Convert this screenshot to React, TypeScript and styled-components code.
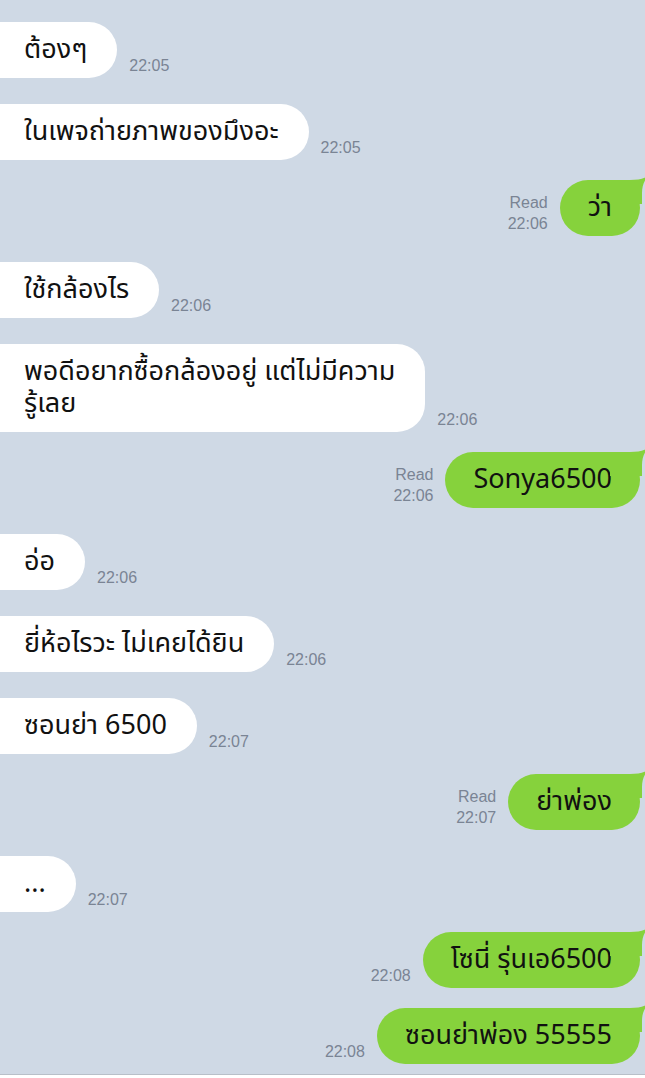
import React from 'react';
import styled, {createGlobalStyle} from 'styled-components';

interface Message {
  text: string;
  time: string;
  mine?: boolean;
  read?: boolean;
}

const messages: Message[] = [
  {text: 'ต้องๆ', time: '22:05'},
  {text: 'ในเพจถ่ายภาพของมึงอะ', time: '22:05'},
  {text: 'ว่า', time: '22:06', mine: true, read: true},
  {text: 'ใช้กล้องไร', time: '22:06'},
  {text: 'พอดีอยากซื้อกล้องอยู่ แต่ไม่มีความ\nรู้เลย', time: '22:06'},
  {text: 'Sonya6500', time: '22:06', mine: true, read: true},
  {text: 'อ่อ', time: '22:06'},
  {text: 'ยี่ห้อไรวะ ไม่เคยได้ยิน', time: '22:06'},
  {text: 'ซอนย่า 6500', time: '22:07'},
  {text: 'ย่าพ่อง', time: '22:07', mine: true, read: true},
  {text: '...', time: '22:07'},
  {text: 'โซนี่ รุ่นเอ6500', time: '22:08', mine: true},
  {text: 'ซอนย่าพ่อง 55555', time: '22:08', mine: true},
];

const GlobalStyle = createGlobalStyle`
  html, body {
    margin: 0;
    padding: 0;
    background: #cfd9e5;
    overflow: hidden;
  }
  * {
    box-sizing: border-box;
  }
`;

const Screen = styled.div`
  width: 645px;
  height: 1078px;
  display: flex;
  flex-direction: column;
  overflow: hidden;
  background: #cfd9e5;
  font-family: 'Noto Sans Thai', 'Noto Sans', 'Liberation Sans', sans-serif;
`;

const ChatList = styled.div`
  flex: 1;
  display: flex;
  flex-direction: column;
  padding-top: 22px;
`;

const Row = styled.div<{$mine?: boolean}>`
  display: flex;
  align-items: flex-end;
  justify-content: ${p => (p.$mine ? 'flex-end' : 'flex-start')};
  gap: 12px;
  margin-top: ${p => (p.$mine ? '20px' : '26px')};
  padding-right: 5px;
  &:first-child {
    margin-top: 0;
  }
`;

const Bubble = styled.div<{$mine?: boolean}>`
  position: relative;
  font-size: 27px;
  line-height: 32px;
  color: #111;
  white-space: pre-line;
  border-radius: 28px;
  padding: ${p => (p.$mine ? '12px 28px 12px 28px' : '12px 30px 12px 54px')};
  margin-left: ${p => (p.$mine ? '0' : '-30px')};
  background: ${p => (p.$mine ? '#86d23c' : '#ffffff')};
`;

const Tail = styled.svg`
  position: absolute;
  top: -4px;
  right: -8px;
  width: 38px;
  height: 28px;
`;

const Stamp = styled.div`
  font-family: 'Liberation Sans', sans-serif;
  font-size: 16px;
  line-height: 21px;
  color: #7a8494;
  text-align: right;
  margin-bottom: 2px;
  display: flex;
  flex-direction: column;
`;

const Footer = styled.div`
  height: 4px;
  border-top: 1px solid #b8bfc8;
  background: #ffffff;
`;

const ChatRow = ({m}: {m: Message}) => {
  const stamp = (
    <Stamp>
      {m.read && <span>Read</span>}
      <span>{m.time}</span>
    </Stamp>
  );
  return (
    <Row $mine={m.mine}>
      {m.mine && stamp}
      <Bubble $mine={m.mine}>
        {m.mine && (
          <Tail viewBox="0 0 38 28">
            <path d="M0 4 L20 4 C28 4 33 3 38 0 C34 5 32 10 32 17 L32 28 L0 28 Z" fill="#86d23c" />
          </Tail>
        )}
        {m.text}
      </Bubble>
      {!m.mine && stamp}
    </Row>
  );
};

const App = () => {
  return (
    <>
      <GlobalStyle />
      <Screen>
        <ChatList>
          {messages.map((m, i) => (
            <ChatRow key={i} m={m} />
          ))}
        </ChatList>
        <Footer />
      </Screen>
    </>
  );
};

export default App;
